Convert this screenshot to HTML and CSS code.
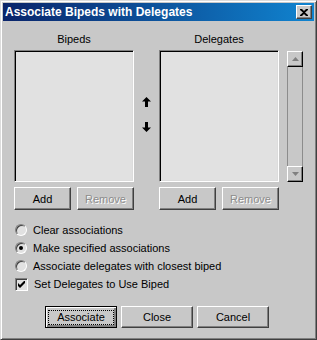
FILE: index.html
```html
<!DOCTYPE html>
<html lang="en">
<head>
  <meta charset="UTF-8">
  <title>Associate Bipeds with Delegates</title>
  <link rel="stylesheet" href="styles.css">
</head>
<body>

  <div class="window">

    <!-- Title bar -->
    <div class="titlebar">
      <span class="title">Associate Bipeds with Delegates</span>
      <button class="close-btn">
        <svg width="8" height="7" viewBox="0 0 8 7"><path d="M0 0h2l2 2 2-2h2v1L5 3.5 8 6v1H6L4 5 2 7H0V6l3-2.5L0 1z" fill="#000"/></svg>
      </button>
    </div>

    <div class="content">

      <!-- Lists -->
      <div class="lists">
        <div class="label">Bipeds</div>
        <div></div>
        <div class="label">Delegates</div>
        <div></div>
        <div></div>

        <div class="listbox"></div>
        <div class="arrows">
          <svg width="9" height="10" viewBox="0 0 9 10"><path d="M4.5 0L9 4.5H6V10H3V4.5H0z" fill="#000"/></svg>
          <svg width="9" height="10" viewBox="0 0 9 10"><path d="M4.5 10L9 5.5H6V0H3v5.5H0z" fill="#000"/></svg>
        </div>
        <div class="listbox"></div>
        <div></div>
        <div class="scrollbar">
          <div class="scroll-btn"><svg width="7" height="4" viewBox="0 0 7 4"><path d="M3.5 0L7 4H0z" fill="#808080"/></svg></div>
          <div class="scroll-track"></div>
          <div class="scroll-btn"><svg width="7" height="4" viewBox="0 0 7 4"><path d="M3.5 4L7 0H0z" fill="#808080"/></svg></div>
        </div>
      </div>

      <!-- Add / Remove -->
      <div class="list-buttons">
        <div class="pair">
          <button class="btn">Add</button>
          <button class="btn disabled">Remove</button>
        </div>
        <div class="pair">
          <button class="btn">Add</button>
          <button class="btn disabled">Remove</button>
        </div>
      </div>

      <!-- Options -->
      <div class="options">
        <div class="option"><span class="radio"></span>Clear associations</div>
        <div class="option"><span class="radio checked"></span>Make specified associations</div>
        <div class="option"><span class="radio"></span>Associate delegates with closest biped</div>
        <div class="option">
          <span class="checkbox">
            <svg width="7" height="7" viewBox="0 0 7 7"><path d="M0 2l2 2 5-5v3L2 7 0 5z" fill="#000"/></svg>
          </span>Set Delegates to Use Biped
        </div>
      </div>

      <!-- Dialog buttons -->
      <div class="dialog-buttons">
        <button class="btn wide default"><span class="focus">Associate</span></button>
        <button class="btn wide">Close</button>
        <button class="btn wide">Cancel</button>
      </div>

    </div>
  </div>

</body>
</html>
```

FILE: styles.css
```css
body {
  margin: 0;
  font-family: "Liberation Sans", Arial, sans-serif;
  font-size: 11px;
  color: #000;
  background: #c8c8c8;
}

.window {
  width: 317px;
  height: 340px;
  box-sizing: border-box;
  padding: 2px;
  background: #c8c8c8;
  border: 1px solid;
  border-color: #dcdcdc #404040 #404040 #dcdcdc;
  box-shadow: inset 1px 1px #fff, inset -1px -1px #808080;
}

.titlebar {
  height: 18px;
  display: flex;
  align-items: center;
  justify-content: space-between;
  padding: 0 2px 0 2px;
  background: linear-gradient(to right, #0a246a, #1084d0);
}

.title {
  color: #fff;
  font-weight: bold;
  font-size: 12px;
}

.close-btn {
  width: 16px;
  height: 14px;
  padding: 0;
  display: flex;
  align-items: center;
  justify-content: center;
  background: #c8c8c8;
  border: 1px solid;
  border-color: #fff #404040 #404040 #fff;
  box-shadow: inset -1px -1px #808080;
}

.content {
  padding: 12px 0 0 11px;
}

.lists {
  display: grid;
  grid-template-columns: 120px 25px 120px 8px 16px;
  grid-template-rows: 17px 132px;
}

.label {
  text-align: center;
  line-height: 13px;
}

.listbox {
  background: #e1e1e1;
  border: 1px solid;
  border-color: #808080 #fff #fff #808080;
  box-shadow: inset 1px 1px #000, inset -1px -1px #dcdcdc;
}

.arrows {
  display: flex;
  flex-direction: column;
  align-items: center;
  gap: 15px;
  padding: 47px 0 0 0;
}

.scrollbar {
  display: flex;
  flex-direction: column;
  margin-top: 1px;
}

.scroll-btn {
  height: 16px;
  box-sizing: border-box;
  display: flex;
  align-items: center;
  justify-content: center;
  background: #c8c8c8;
  border: 1px solid;
  border-color: #fff #000 #000 #fff;
  box-shadow: inset -1px -1px #808080;
}

.scroll-track {
  flex: 1;
  border-left: 1px solid #8c8c8c;
  border-right: 1px solid #8c8c8c;
}

.list-buttons {
  display: flex;
  gap: 25px;
  margin-top: 5px;
}

.pair {
  display: flex;
  gap: 6px;
}

.btn {
  width: 57px;
  height: 23px;
  padding: 0;
  font-family: "Liberation Sans", Arial, sans-serif;
  font-size: 11px;
  color: #000;
  background: #c8c8c8;
  border: 1px solid;
  border-color: #fff #404040 #404040 #fff;
  box-shadow: inset -1px -1px #808080;
}

.btn.disabled {
  color: #8c8c8c;
  text-shadow: 1px 1px #fff;
}

.options {
  margin-top: 11px;
  display: flex;
  flex-direction: column;
}

.option {
  height: 18px;
  display: flex;
  align-items: center;
  gap: 6px;
  padding-left: 1px;
}

.radio {
  width: 12px;
  height: 12px;
  box-sizing: border-box;
  border-radius: 50%;
  border: 1px solid;
  border-color: #808080 #fff #fff #808080;
  background: #e1e1e1;
  box-shadow: inset 1px 1px #404040;
  display: flex;
  align-items: center;
  justify-content: center;
}

.radio.checked::after {
  content: "";
  width: 4px;
  height: 4px;
  border-radius: 50%;
  background: #000;
}

.checkbox {
  width: 13px;
  height: 13px;
  box-sizing: border-box;
  border: 1px solid;
  border-color: #808080 #fff #fff #808080;
  background: #e1e1e1;
  box-shadow: inset 1px 1px #404040;
  display: flex;
  align-items: center;
  justify-content: center;
}

.dialog-buttons {
  display: flex;
  gap: 4px;
  margin: 13px 0 0 31px;
}

.btn.wide {
  width: 72px;
  height: 22px;
}

.btn.default {
  border-color: #000;
  box-shadow: inset 1px 1px #fff, inset -2px -2px #808080;
}

.focus {
  display: inline-block;
  width: 64px;
  line-height: 13px;
  outline: 1px dotted #000;
}
```
